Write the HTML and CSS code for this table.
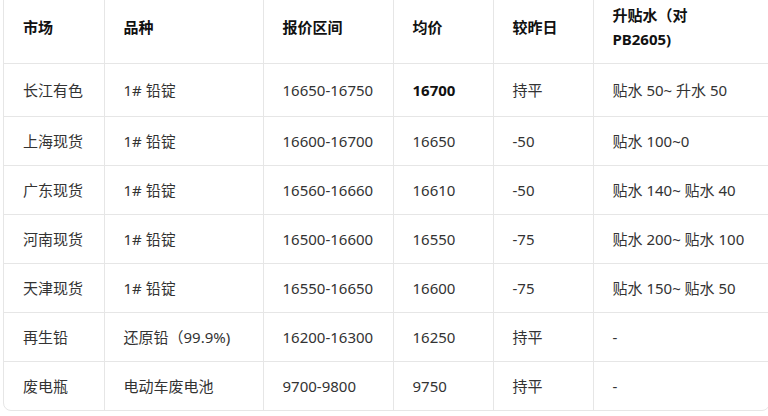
FILE: index.html
```html
<!DOCTYPE html>
<html lang="zh-CN">
<head>
<meta charset="utf-8">
<title>铅价</title>
<link rel="stylesheet" href="styles.css">
</head>
<body>
<div class="table-wrap">
  <table class="price-table">
    <colgroup>
      <col class="c-market">
      <col class="c-kind">
      <col class="c-range">
      <col class="c-avg">
      <col class="c-change">
      <col class="c-premium">
    </colgroup>
    <thead>
      <tr>
        <th>市场</th>
        <th>品种</th>
        <th>报价区间</th>
        <th>均价</th>
        <th>较昨日</th>
        <th>升贴水（对<br>PB2605)</th>
      </tr>
    </thead>
    <tbody>
      <tr class="first">
        <td>长江有色</td>
        <td>1# 铅锭</td>
        <td>16650-16750</td>
        <td><strong>16700</strong></td>
        <td>持平</td>
        <td>贴水 50~ 升水 50</td>
      </tr>
      <tr>
        <td>上海现货</td>
        <td>1# 铅锭</td>
        <td>16600-16700</td>
        <td>16650</td>
        <td>-50</td>
        <td>贴水 100~0</td>
      </tr>
      <tr>
        <td>广东现货</td>
        <td>1# 铅锭</td>
        <td>16560-16660</td>
        <td>16610</td>
        <td>-50</td>
        <td>贴水 140~ 贴水 40</td>
      </tr>
      <tr>
        <td>河南现货</td>
        <td>1# 铅锭</td>
        <td>16500-16600</td>
        <td>16550</td>
        <td>-75</td>
        <td>贴水 200~ 贴水 100</td>
      </tr>
      <tr>
        <td>天津现货</td>
        <td>1# 铅锭</td>
        <td>16550-16650</td>
        <td>16600</td>
        <td>-75</td>
        <td>贴水 150~ 贴水 50</td>
      </tr>
      <tr>
        <td>再生铅</td>
        <td>还原铅（99.9%)</td>
        <td>16200-16300</td>
        <td>16250</td>
        <td>持平</td>
        <td>-</td>
      </tr>
      <tr>
        <td>废电瓶</td>
        <td>电动车废电池</td>
        <td>9700-9800</td>
        <td>9750</td>
        <td>持平</td>
        <td>-</td>
      </tr>
    </tbody>
  </table>
</div>
</body>
</html>
```

FILE: styles.css
```css
html, body {
  margin: 0;
  padding: 0;
  background: #ffffff;
}

body {
  padding-left: 3px;
  font-family: "Noto Sans", "Noto Sans CJK SC", sans-serif;
  font-size: 15px;
  color: #333333;
  overflow: hidden;
}

.table-wrap {
  margin-top: -10px;
  width: 765px;
  border: 1px solid #e6e6e6;
  border-radius: 8px;
  overflow: hidden;
}

.price-table {
  width: 100%;
  border-collapse: collapse;
  table-layout: fixed;
}

.c-market { width: 100px; }
.c-kind { width: 159px; }
.c-range { width: 130px; }
.c-avg { width: 100px; }
.c-change { width: 100px; }
.c-premium { width: 176px; }

.price-table th,
.price-table td {
  padding: 12px 18px 12px 19px;
  line-height: 24px;
  text-align: left;
  vertical-align: middle;
  border-right: 1px solid #e6e6e6;
  border-bottom: 1px solid #e6e6e6;
}

.price-table th:last-child,
.price-table td:last-child {
  border-right: none;
}

.price-table tbody tr:last-child td {
  border-bottom: none;
}

.price-table th {
  font-weight: 700;
  color: #111111;
}

.price-table tr.first td {
  padding-top: 14px;
  padding-bottom: 14px;
}

.price-table strong {
  font-weight: 700;
  color: #111111;
}
```
